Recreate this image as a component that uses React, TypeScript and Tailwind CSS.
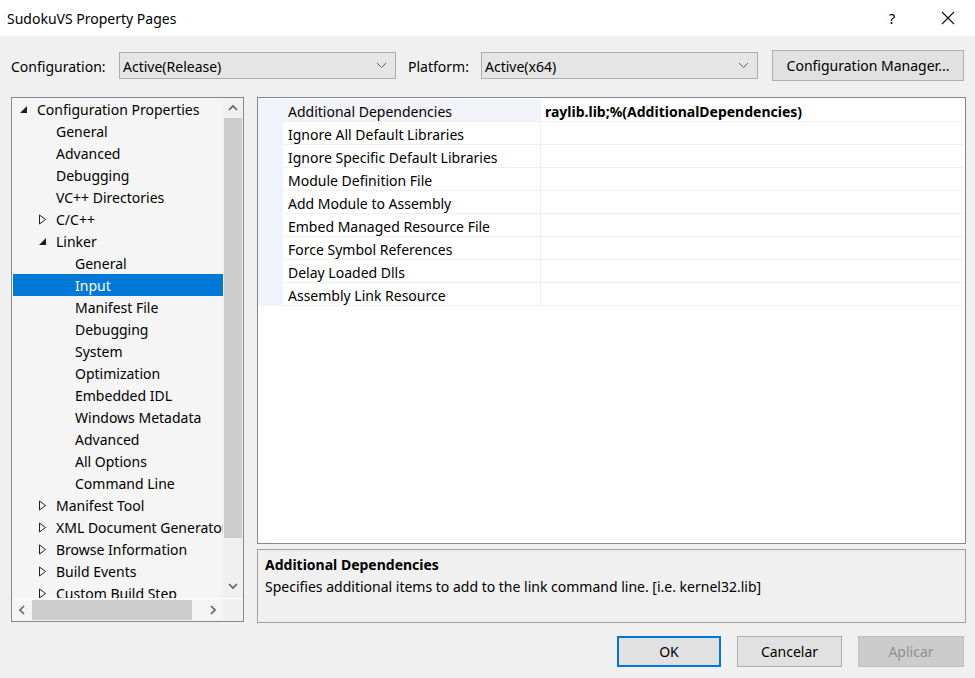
import React from 'react';

type Node = { label: string; level: number; exp?: 'open' | 'closed'; selected?: boolean };

const tree: Node[] = [
  { label: 'Configuration Properties', level: 0, exp: 'open' },
  { label: 'General', level: 1 },
  { label: 'Advanced', level: 1 },
  { label: 'Debugging', level: 1 },
  { label: 'VC++ Directories', level: 1 },
  { label: 'C/C++', level: 1, exp: 'closed' },
  { label: 'Linker', level: 1, exp: 'open' },
  { label: 'General', level: 2 },
  { label: 'Input', level: 2, selected: true },
  { label: 'Manifest File', level: 2 },
  { label: 'Debugging', level: 2 },
  { label: 'System', level: 2 },
  { label: 'Optimization', level: 2 },
  { label: 'Embedded IDL', level: 2 },
  { label: 'Windows Metadata', level: 2 },
  { label: 'Advanced', level: 2 },
  { label: 'All Options', level: 2 },
  { label: 'Command Line', level: 2 },
  { label: 'Manifest Tool', level: 1, exp: 'closed' },
  { label: 'XML Document Generator', level: 1, exp: 'closed' },
  { label: 'Browse Information', level: 1, exp: 'closed' },
  { label: 'Build Events', level: 1, exp: 'closed' },
  { label: 'Custom Build Step', level: 1, exp: 'closed' },
];

const props = [
  'Additional Dependencies',
  'Ignore All Default Libraries',
  'Ignore Specific Default Libraries',
  'Module Definition File',
  'Add Module to Assembly',
  'Embed Managed Resource File',
  'Force Symbol References',
  'Delay Loaded Dlls',
  'Assembly Link Resource',
];

const Chevron = ({ dir, color = '#606060' }: { dir: 'up' | 'down' | 'left' | 'right'; color?: string }) => {
  const pts = {
    up: '1,6 5,2 9,6',
    down: '1,2 5,6 9,2',
    left: '6,1 2,5 6,9',
    right: '2,1 6,5 2,9',
  }[dir];
  const w = dir === 'up' || dir === 'down' ? 10 : 8;
  const h = dir === 'up' || dir === 'down' ? 8 : 10;
  return (
    <svg width={w} height={h} viewBox={`0 0 ${w} ${h}`}>
      <polyline points={pts} fill="none" stroke={color} strokeWidth="1.6" />
    </svg>
  );
};

const Expander = ({ kind }: { kind: 'open' | 'closed' }) =>
  kind === 'open' ? (
    <svg width="9" height="9" viewBox="0 0 9 9">
      <polygon points="8,1 8,8 1,8" fill="#1e1e1e" />
    </svg>
  ) : (
    <svg width="9" height="11" viewBox="0 0 9 11">
      <polygon points="1.5,1 7.5,5.5 1.5,10" fill="none" stroke="#1e1e1e" strokeWidth="1" />
    </svg>
  );

const Dropdown = ({ value, width }: { value: string; width: string }) => (
  <div className={`${width} h-[27px] bg-[#e5e5e5] border border-[#acacac] flex items-center justify-between pl-[3px] pr-[8px]`}>
    <span className="pt-[1px]">{value}</span>
    <svg width="11" height="7" viewBox="0 0 11 7">
      <polyline points="1,1 5.5,5.5 10,1" fill="none" stroke="#5a5a5a" strokeWidth="1" />
    </svg>
  </div>
);

export default function App() {
  return (
    <div className="w-[975px] h-[678px] bg-[#f0f0f0] flex flex-col overflow-hidden text-[14px] text-black font-['Noto_Sans',_'Open_Sans',_sans-serif]">
      {/* title bar */}
      <div className="h-[36px] bg-white flex items-center pl-[7px] shrink-0">
        <span className="text-[14px] flex-1">SudokuVS Property Pages</span>
        <span className="w-[20px] text-center text-[15px] mr-[39px]">?</span>
        <svg width="14" height="14" viewBox="0 0 14 14" className="mr-[20px]">
          <path d="M1 1 L13 13 M13 1 L1 13" stroke="#111" strokeWidth="1.1" />
        </svg>
      </div>

      {/* configuration row */}
      <div className="flex items-center h-[31px] mt-[14px] shrink-0">
        <span className="ml-[11px] w-[108px] pt-[1px]">Configuration:</span>
        <Dropdown value="Active(Release)" width="w-[277px]" />
        <span className="ml-[12px] w-[73px] pt-[1px]">Platform:</span>
        <Dropdown value="Active(x64)" width="w-[277px]" />
        <button className="ml-[14px] w-[192px] h-[31px] bg-[#e1e1e1] border border-[#adadad] flex items-center justify-center">
          Configuration Manager...
        </button>
      </div>

      {/* main */}
      <div className="flex mt-[16px] shrink-0">
        {/* tree */}
        <div className="ml-[11px] w-[233px] h-[525px] border border-[#828790] bg-[#f5f5f5] flex flex-col">
          <div className="flex h-[500px]">
            <div className="flex-1 overflow-hidden pl-[1px]">
              {tree.map((n, i) => (
                <div
                  key={i}
                  className={`h-[22px] flex items-center whitespace-nowrap ${n.selected ? 'bg-[#0078d7] text-white' : ''}`}
                  style={{ paddingLeft: 6 + n.level * 19 }}
                >
                  <span className="w-[18px] shrink-0 flex items-center">{n.exp && <Expander kind={n.exp} />}</span>
                  <span>{n.label}</span>
                </div>
              ))}
            </div>
            <div className="w-[20px] bg-[#f0f0f0] flex flex-col">
              <div className="h-[20px] flex items-center justify-center">
                <Chevron dir="up" />
              </div>
              <div className="h-[420px] mx-[1px] bg-[#cdcdcd]" />
              <div className="flex-1 flex items-end justify-center pb-[8px]">
                <Chevron dir="down" />
              </div>
            </div>
          </div>
          <div className="flex h-[23px] border-t border-[#ffffff]">
            <div className="w-[20px] flex items-center justify-center">
              <Chevron dir="left" />
            </div>
            <div className="w-[160px] bg-[#cdcdcd] my-[1px]" />
            <div className="flex-1 flex items-center justify-end pr-[6px]">
              <Chevron dir="right" />
            </div>
            <div className="w-[20px] bg-[#f0f0f0]" />
          </div>
        </div>

        {/* right column */}
        <div className="ml-[13px] w-[709px] flex flex-col">
          <div className="h-[447px] border border-[#828790] bg-white pt-[1px]">
            {props.map((p, i) => (
              <div key={p} className="h-[23px] flex">
                <div className="w-[25px] bg-[#f0f3f9]" />
                <div
                  className={`w-[258px] flex items-center pl-[5px] pt-[2px] border-b border-r border-[#f0f0f0] ${i === 0 ? 'bg-[#f2f4f9]' : ''}`}
                >
                  {p}
                </div>
                <div className="flex-1 flex items-center pl-[4px] pt-[2px] border-b border-[#f0f0f0] font-bold">
                  {i === 0 ? 'raylib.lib;%(AdditionalDependencies)' : ''}
                </div>
              </div>
            ))}
          </div>
          <div className="mt-[5px] h-[74px] border border-[#a0a0a0] bg-[#f0f0f0] pl-[7px] pt-[3px]">
            <div className="font-bold h-[22px] flex items-center">Additional Dependencies</div>
            <div className="h-[22px] flex items-center">Specifies additional items to add to the link command line. [i.e. kernel32.lib]</div>
          </div>
        </div>
      </div>

      {/* buttons */}
      <div className="flex justify-end mt-[13px] mr-[11px] gap-[16px] shrink-0">
        <button className="w-[104px] h-[31px] bg-[#e1e1e1] border-2 border-[#0078d7]">OK</button>
        <button className="w-[105px] h-[31px] bg-[#e1e1e1] border border-[#adadad]">Cancelar</button>
        <button className="w-[106px] h-[31px] bg-[#cccccc] border border-[#bfbfbf] text-[#8f8f8f]">Aplicar</button>
      </div>
    </div>
  );
}
